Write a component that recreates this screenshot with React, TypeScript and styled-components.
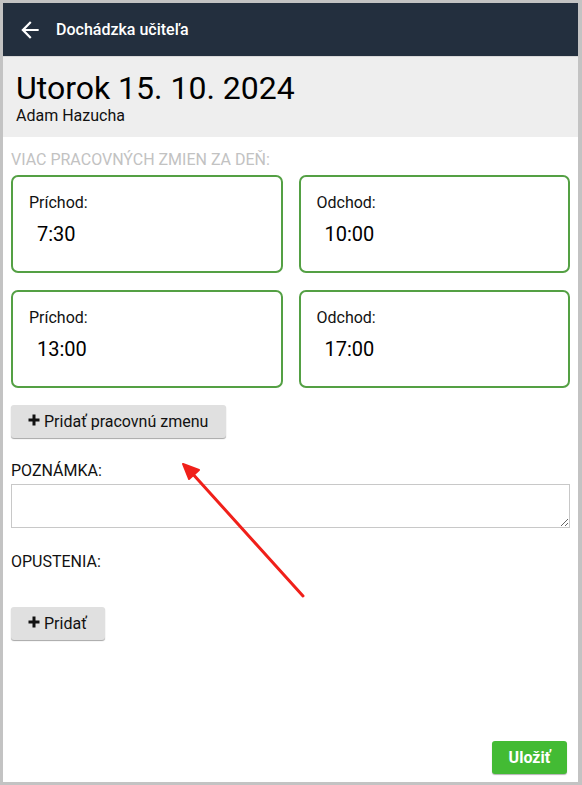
import React from "react";
import styled, { createGlobalStyle } from "styled-components";

const Global = createGlobalStyle`
  html, body { margin: 0; padding: 0; background: #ffffff; }
  body { font-family: Roboto, "Liberation Sans", Arial, sans-serif; }
  * { box-sizing: border-box; }
`;

const Frame = styled.div`
  position: relative;
  width: 582px;
  height: 785px;
  border-style: solid;
  border-color: #c3c3c3;
  border-width: 3px 4px 3px 3px;
  display: flex;
  flex-direction: column;
  background: #ffffff;
  overflow: hidden;
`;

const TopBar = styled.header`
  height: 54px;
  background: #232f3e;
  display: flex;
  align-items: center;
  padding-left: 16px;
  gap: 13px;
  border-bottom: 1px solid #d8d8d8;
  flex-shrink: 0;
`;

const Title = styled.h1`
  margin: 0;
  color: #ffffff;
  font-size: 16px;
  font-weight: 500;
`;

const DateBlock = styled.section`
  background: #eeeeee;
  height: 80px;
  padding: 12px 13px 0;
  flex-shrink: 0;
`;

const DateTitle = styled.div`
  font-size: 32px;
  line-height: 38px;
  color: #000000;
`;

const Teacher = styled.div`
  font-size: 16px;
  line-height: 18px;
  color: #111111;
`;

const Content = styled.main`
  flex: 1;
  display: flex;
  flex-direction: column;
  padding: 13px 8px 8px 8px;
`;

const SectionLabel = styled.div<{ $muted?: boolean }>`
  font-size: 16px;
  line-height: 19px;
  color: ${(p) => (p.$muted ? "#c2c2c2" : "#111111")};
`;

const ShiftGrid = styled.div`
  display: grid;
  grid-template-columns: 1fr 1fr;
  column-gap: 16px;
  row-gap: 17px;
  margin-top: 6px;
`;

const TimeCard = styled.div`
  height: 98px;
  border: 2px solid #54a044;
  border-radius: 7px;
  padding: 16px 16px 0;
`;

const CardLabel = styled.div`
  font-size: 16px;
  line-height: 19px;
  color: #111111;
`;

const CardValue = styled.div`
  font-size: 20px;
  line-height: 23px;
  color: #000000;
  margin-top: 11px;
  padding-left: 8px;
`;

const GrayButton = styled.button`
  align-self: flex-start;
  height: 33px;
  border: none;
  border-radius: 3px;
  background: #e0e0e0;
  box-shadow: 0 1px 1px rgba(0, 0, 0, 0.35);
  font-family: Roboto, "Liberation Sans", Arial, sans-serif;
  font-size: 16px;
  color: #111111;
  padding: 0 18px 0 17px;
  display: flex;
  align-items: center;
  gap: 4px;
`;

const PlusIcon = () => (
  <svg width="12" height="12" viewBox="0 0 12 12" aria-hidden style={{ marginTop: -3 }}>
    <path d="M6 0.5v11M0.5 6h11" stroke="#111111" strokeWidth="3" />
  </svg>
);

const NoteArea = styled.textarea`
  display: block;
  width: 100%;
  height: 44px;
  margin-top: 4px;
  border: 1px solid #c8c8c8;
  border-radius: 0;
  resize: vertical;
  font-family: Roboto, "Liberation Sans", Arial, sans-serif;
  font-size: 15px;
`;

const Footer = styled.div`
  margin-top: auto;
  display: flex;
  justify-content: flex-end;
  padding-right: 3px;
`;

const SaveButton = styled.button`
  height: 33px;
  width: 75px;
  border: none;
  border-radius: 3px;
  background: #43bb34;
  box-shadow: 0 1px 1px rgba(0, 0, 0, 0.3);
  color: #ffffff;
  font-family: Roboto, "Liberation Sans", Arial, sans-serif;
  font-size: 16px;
  font-weight: 700;
`;

const Annotation = styled.svg`
  position: absolute;
  left: 0;
  top: 0;
  pointer-events: none;
`;

const BackArrow = () => (
  <svg width="26" height="26" viewBox="0 0 24 24" aria-hidden style={{ marginLeft: -2 }}>
    <path
      d="M20 11H7.83l5.59-5.59L12 4l-8 8 8 8 1.41-1.41L7.83 13H20v-2z"
      fill="#ffffff"
    />
  </svg>
);

const shifts = [
  { label: "Príchod:", value: "7:30" },
  { label: "Odchod:", value: "10:00" },
  { label: "Príchod:", value: "13:00" },
  { label: "Odchod:", value: "17:00" },
];

export default function App() {
  return (
    <>
      <Global />
      <Frame>
        <TopBar>
          <BackArrow />
          <Title>Dochádzka učiteľa</Title>
        </TopBar>
        <DateBlock>
          <DateTitle>Utorok 15. 10. 2024</DateTitle>
          <Teacher>Adam Hazucha</Teacher>
        </DateBlock>
        <Content>
          <SectionLabel $muted>VIAC PRACOVNÝCH ZMIEN ZA DEŇ:</SectionLabel>
          <ShiftGrid>
            {shifts.map((s, i) => (
              <TimeCard key={i}>
                <CardLabel>{s.label}</CardLabel>
                <CardValue>{s.value}</CardValue>
              </TimeCard>
            ))}
          </ShiftGrid>
          <GrayButton style={{ marginTop: 17 }}>
            <PlusIcon /> Pridať pracovnú zmenu
          </GrayButton>
          <SectionLabel style={{ marginTop: 23 }}>POZNÁMKA:</SectionLabel>
          <NoteArea />
          <SectionLabel style={{ marginTop: 24 }}>OPUSTENIA:</SectionLabel>
          <GrayButton style={{ marginTop: 36 }}>
            <PlusIcon /> Pridať
          </GrayButton>
          <Footer>
            <SaveButton>Uložiť</SaveButton>
          </Footer>
        </Content>
        <Annotation width="582" height="785" viewBox="0 0 582 785">
          <line x1="300" y1="593" x2="188" y2="469" stroke="#f0201a" strokeWidth="3" strokeLinecap="round" />
          <polygon points="180,461 196,467 186,476" fill="#f0201a" stroke="#f0201a" strokeWidth="2" strokeLinejoin="round" />
        </Annotation>
      </Frame>
    </>
  );
}
